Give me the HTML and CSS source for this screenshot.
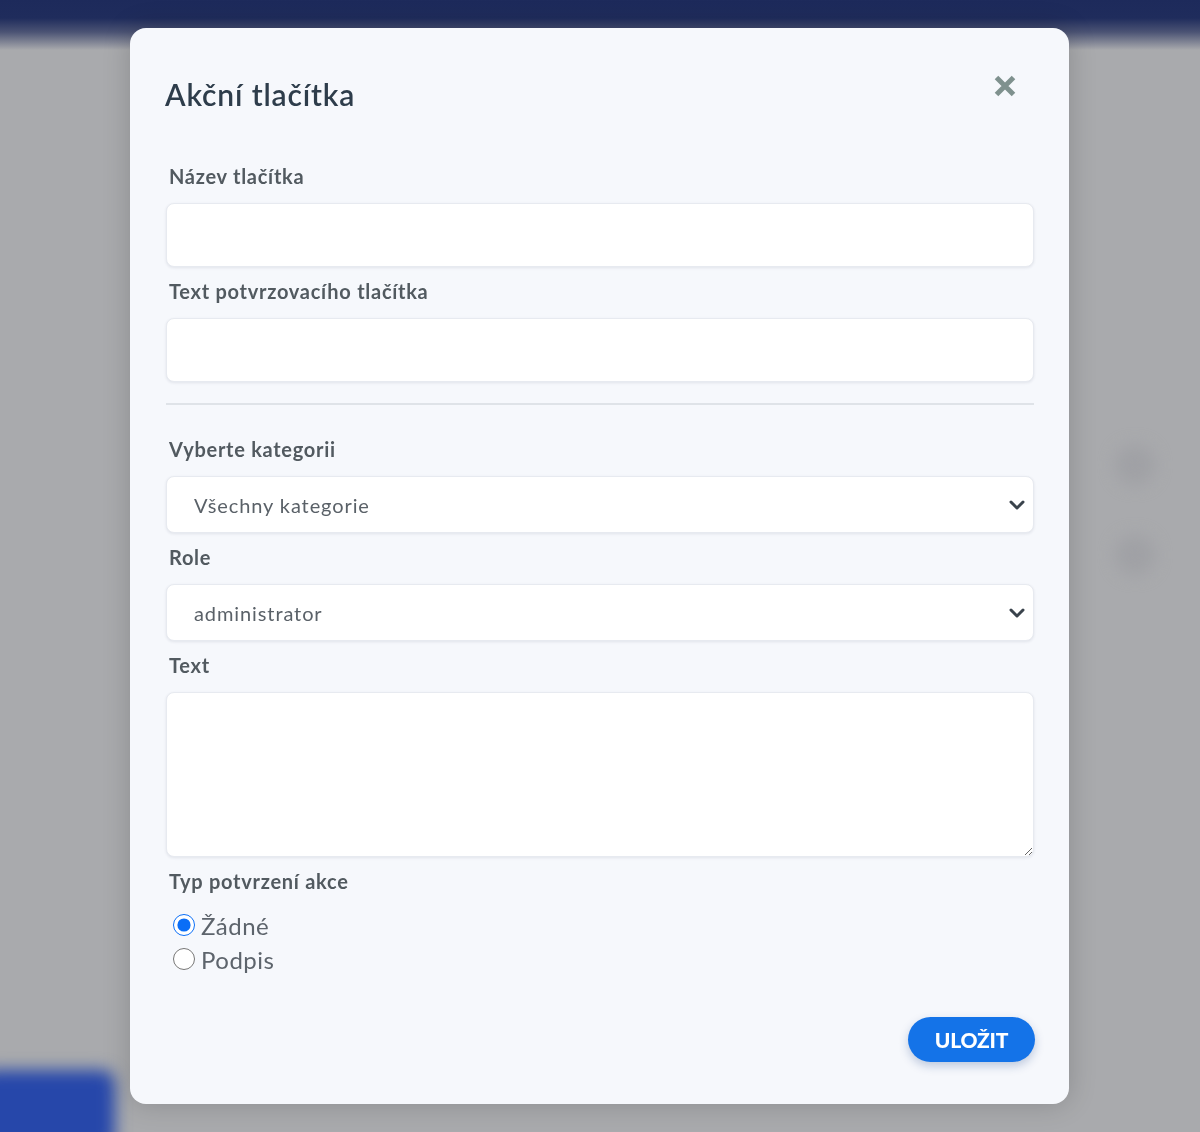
FILE: index.html
```html
<!DOCTYPE html>
<html lang="cs">
<head>
<meta charset="utf-8">
<title>Akční tlačítka</title>
<link rel="stylesheet" href="styles.css">
</head>
<body>
<div class="backdrop">
  <div class="topbar"></div>
  <div class="ghost ghost-a"></div>
  <div class="ghost ghost-b"></div>
  <div class="ghost-btn"></div>
</div>
<div class="overlay">
  <div class="modal">
    <div class="modal-head">
      <h2 class="modal-title">Akční tlačítka</h2>
      <button class="close" type="button" aria-label="Zavřít">
        <svg width="24" height="24" viewBox="0 0 24 24"><path d="M3.5 3.5 L20.5 20.5 M20.5 3.5 L3.5 20.5" stroke="#7f918e" stroke-width="5" stroke-linecap="butt" fill="none"/></svg>
      </button>
    </div>
    <div class="field">
      <label class="label">Název tlačítka</label>
      <input class="control input" type="text">
    </div>
    <div class="field">
      <label class="label">Text potvrzovacího tlačítka</label>
      <input class="control input" type="text">
    </div>
    <hr class="divider">
    <div class="field">
      <label class="label">Vyberte kategorii</label>
      <div class="select-wrap">
        <select class="control select"><option>Všechny kategorie</option></select>
        <svg class="chevron" width="16" height="10" viewBox="0 0 16 10"><path d="M2 2 L8 8 L14 2" stroke="#3a434c" stroke-width="3" fill="none" stroke-linecap="round" stroke-linejoin="round"/></svg>
      </div>
    </div>
    <div class="field">
      <label class="label">Role</label>
      <div class="select-wrap">
        <select class="control select"><option>administrator</option></select>
        <svg class="chevron" width="16" height="10" viewBox="0 0 16 10"><path d="M2 2 L8 8 L14 2" stroke="#3a434c" stroke-width="3" fill="none" stroke-linecap="round" stroke-linejoin="round"/></svg>
      </div>
    </div>
    <div class="field">
      <label class="label">Text</label>
      <textarea class="control textarea"></textarea>
    </div>
    <div class="field radios-field">
      <label class="label">Typ potvrzení akce</label>
      <div class="radios">
        <label class="radio"><input type="radio" name="typ" checked><span>Žádné</span></label>
        <label class="radio"><input type="radio" name="typ"><span>Podpis</span></label>
      </div>
    </div>
    <div class="actions">
      <button class="save" type="button">ULOŽIT</button>
    </div>
  </div>
</div>
</body>
</html>
```
FILE: styles.css
```css
* { box-sizing: border-box; }
html, body { margin: 0; padding: 0; }
body {
  width: 1200px;
  height: 1132px;
  overflow: hidden;
  background: #a9aaad;
  font-family: Lato, "Noto Sans", sans-serif;
}
.backdrop {
  position: relative;
  width: 1200px;
  height: 1132px;
}
.topbar {
  height: 50px;
  background: linear-gradient(to bottom, #1d2a5b 0px, #1f2c5c 18px, #4b5374 32px, #a9aaad 50px);
}
.ghost {
  position: absolute;
  border-radius: 50%;
  background: #a0a1a5;
  filter: blur(8px);
}
.ghost-a { left: 1115px; top: 445px; width: 40px; height: 40px; }
.ghost-b { left: 1115px; top: 535px; width: 40px; height: 40px; }
.ghost-btn {
  position: absolute;
  left: -20px;
  top: 1070px;
  width: 135px;
  height: 80px;
  border-radius: 14px;
  background: #2647aa;
  filter: blur(8px);
}
.overlay {
  position: fixed;
  inset: 0;
  display: flex;
  justify-content: center;
  align-items: flex-start;
  padding-top: 28px;
}
.modal {
  width: 939px;
  margin-left: -1px;
  background: #f6f8fc;
  border-radius: 16px;
  padding: 48px 36px 42px 35px;
  box-shadow: 0 0 28px rgba(0, 0, 0, 0.18);
}
.modal-head {
  display: flex;
  justify-content: space-between;
  align-items: flex-start;
  margin-bottom: 52px;
}
.modal-title {
  margin: 0;
  font-size: 30px;
  line-height: 36px;
  font-weight: 600;
  color: #2e3d4b;
  letter-spacing: 0.85px;
}
.close {
  border: 0;
  padding: 0;
  background: none;
  width: 24px;
  height: 24px;
  margin-top: -2px;
  margin-right: 16px;
  cursor: pointer;
}
.close svg { display: block; }
.field {
  display: flex;
  flex-direction: column;
  margin-bottom: 12px;
}
.label {
  font-size: 20px;
  line-height: 24px;
  font-weight: 700;
  color: #525a60;
  padding-left: 4px;
  margin-bottom: 15px;
  letter-spacing: 0.72px;
}
.control {
  width: 868px;
  margin-left: 1px;
  background: #ffffff;
  border: 1px solid #e7eaf0;
  border-radius: 8px;
  box-shadow: 0 1px 3px rgba(40, 50, 80, 0.10);
  font-family: Lato, "Noto Sans", sans-serif;
  font-size: 20px;
  letter-spacing: 0.9px;
  color: #5a6168;
  outline: none;
}
.input { height: 64px; padding: 0 28px; }
.divider {
  border: 0;
  height: 2px;
  background: #dfe3e8;
  margin: 21px 0 32px 1px;
  width: 868px;
}
.select-wrap { position: relative; }
.select {
  height: 57px;
  padding: 0 27px;
  appearance: none;
  -webkit-appearance: none;
  display: block;
}
.chevron {
  position: absolute;
  right: 8px;
  top: 24px;
}
.textarea {
  height: 165px;
  padding: 12px 28px;
  resize: vertical;
  display: block;
}
.radios-field { margin-bottom: 0; }
.radios {
  display: flex;
  flex-direction: column;
}
.radio {
  display: flex;
  align-items: center;
  height: 34px;
  font-size: 24px;
  letter-spacing: 0.5px;
  color: #5d646c;
  padding-left: 8px;
}
.radio input {
  width: 22px;
  height: 22px;
  margin: 0 6px 0 0;
  accent-color: #0a6ef7;
}
.actions {
  display: flex;
  justify-content: flex-end;
  margin-top: 41px;
}
.save {
  width: 127px;
  height: 45px;
  margin-right: -2px;
  border: 0;
  border-radius: 23px;
  background: #1473e8;
  color: #ffffff;
  font-family: Lato, "Noto Sans", sans-serif;
  font-size: 21px;
  font-weight: 900;
  letter-spacing: -0.2px;
  box-shadow: 0 4px 10px rgba(20, 60, 130, 0.25);
  cursor: pointer;
}
```
